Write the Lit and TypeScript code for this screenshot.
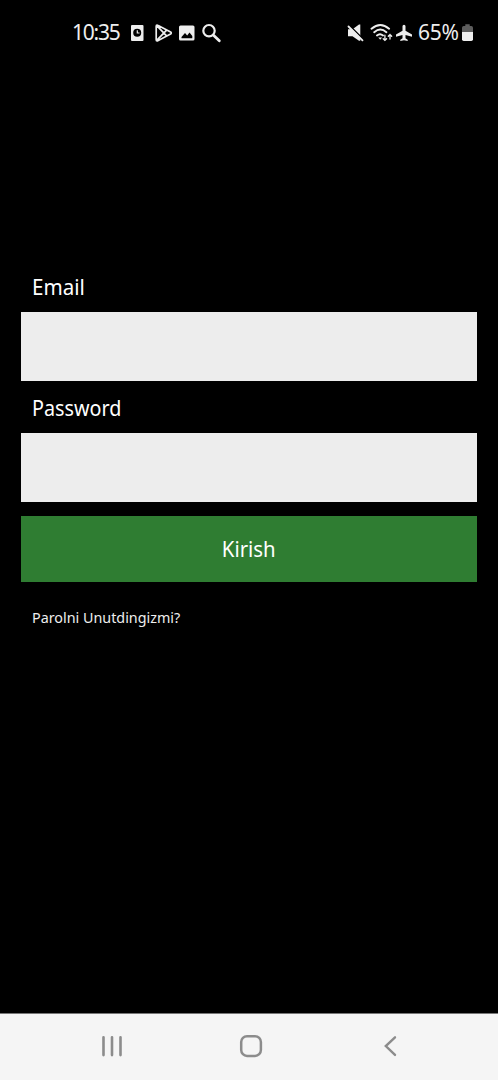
import { LitElement, html, css } from "lit";
import { customElement } from "lit/decorators.js";

@customElement("status-bar")
export class StatusBar extends LitElement {
  static styles = css`
    :host { display: flex; align-items: center; height: 66px; box-sizing: border-box; padding: 0 24px 0 72px; color: #eee; font: 21px/28px "Noto Sans", sans-serif; }
    svg { display: block; flex: none; }
    .time, .battery { white-space: nowrap; margin-top: -2px; }
    .time { width: 57px; letter-spacing: -1.2px; }
    .spacer { flex: 1; }
    .battery { width: 43px; margin-left: 1px; letter-spacing: -0.3px; }
  `;
  render() {
    return html`
      <span class="time">10:35</span>
      <svg width="95" height="20" viewBox="129 23 95 20" fill="#eee">
        <rect x="131" y="25" width="12.500" height="16" rx="1"/>
        <circle cx="137.200" cy="32.800" r="4" fill="#000"/>
        <path d="M137.300 30.300v2.700h2.200" fill="none" stroke="#eee" stroke-width="1.200"/>
        <path d="M157 25.200q-.800 0-.800 1v13.600q0 1 .8 1q.5 0 1.200-.4l12.400-6.400q1.300-1 0-2l-12.400-6.400q-.7-.4-1.200-.4zM157 25.800l9.600 10M157 40.200l9.600-10" fill="none" stroke="#eee" stroke-width="1.700" stroke-linejoin="round"/>
        <path fill-rule="evenodd" d="M180.500 25.500h12.500a1.500 1.500 0 0 1 1.500 1.500v12a1.500 1.500 0 0 1-1.500 1.500H180.500a1.500 1.500 0 0 1-1.500-1.500v-12a1.500 1.500 0 0 1 1.500-1.500zM181.500 38.200h10.800v-2.300l-2.800-3.300l-2.300 2.800l-2.200-2.300l-3.500 4z"/>
        <circle cx="209" cy="30.700" r="5.700" fill="none" stroke="#eee" stroke-width="2.200"/>
        <path d="M213.500 35.200l5.800 5.500" stroke="#eee" stroke-width="2.800" stroke-linecap="round"/>
      </svg>
      <span class="spacer"></span>
      <svg width="72" height="20" viewBox="345 23 72 20" fill="#eee">
        <path d="M348 29.300h4.500l6.500-4.800h1.300v16.300h-1.300l-6.500-4.500h-4.500z"/>
        <path d="M350 26l14 14" fill="none" stroke="#000" stroke-width="1.700"/>
        <path d="M348.500 26.500l14 13.900" fill="none" stroke="#eee" stroke-width="1.800" stroke-linecap="round"/>
        <g fill="none" stroke="#eee" stroke-linecap="round">
          <path d="M371.500 28.700q8.800-7.600 17.600 0M374.200 32.200q6.100-5.200 12.200 0M377 35.500q3-2.500 6 0" stroke-width="1.900"/>
          <path d="M384.900 35.200v5M383.200 38.700l1.700 1.700l1.700-1.700M390 39v-4.600M388.300 36.200l1.700-1.700l1.700 1.700" stroke-width="1.300"/>
        </g>
        <path d="M378.300 37.500h3.800l-1.900 2.200z"/>
        <path d="M404 24.800q1.500 0 1.500 1.500v4.500l6.500 3.800v2.100l-6.500-1.800v3.400l2.200 1.500v1.300l-3.700-.9l-3.700.9v-1.300l2.200-1.500v-3.400l-6.500 1.800v-2.100l6.500-3.800v-4.500q0-1.500 1.500-1.500z"/>
      </svg>
      <span class="battery">65%</span>
      <svg width="13" height="20" viewBox="461 23 13 20">
        <path d="M465.300 24.200h4.400v1.800h1.600q1.700 0 1.700 1.700V32H462v-4.300q0-1.700 1.700-1.700h1.600z" fill="#5d5d5d"/>
        <path d="M462 32h11v7.300q0 1.700-1.700 1.700h-7.600q-1.700 0-1.700-1.700z" fill="#eee"/>
      </svg>`;
  }
}

@customElement("login-form")
export class LoginForm extends LitElement {
  static styles = css`
    :host { display: block; padding: 206px 21px 0; color: #fff; font: 21px/30px "Noto Sans", sans-serif; }
    form { display: flex; flex-direction: column; }
    label { display: block; height: 40px; box-sizing: border-box; padding: 0 0 0 11px; }
    .name { display: inline-block; transform-origin: 0 50%; transform: scaleX(0.94); }
    .email { transform: scaleX(0.98); }
    .field { display: block; width: 100%; height: 69px; box-sizing: border-box; border: 0; border-radius: 0; margin: 0 0 12px; background: #ededed; outline: none; padding: 0 12px; font: inherit; }
    .field.last { margin-bottom: 14px; }
    button { height: 66px; border: 0; padding: 0; background: #2f7d32; color: #fff; font: inherit; }
    .kirish { display: inline-block; transform: scaleX(0.97); }
    .forgot { margin: 20px 0 0 11px; font-size: 15px; color: #eee; }
    .link { display: inline-block; transform-origin: 0 50%; transform: scaleX(0.955); }
  `;
  render() {
    return html`<form>
      <label for="email"><span class="name email">Email</span></label>
      <input class="field" id="email" type="email">
      <label for="password"><span class="name">Password</span></label>
      <input class="field last" id="password" type="password">
      <button type="button"><span class="kirish">Kirish</span></button>
      <div class="forgot"><span class="link">Parolni Unutdingizmi?</span></div>
    </form>`;
  }
}

@customElement("nav-bar")
export class NavBar extends LitElement {
  static styles = css`
    :host { display: flex; align-items: center; justify-content: space-between; height: 67px; box-sizing: border-box; border-top: 1px solid #777; padding: 0 96px 2px 100px; background: #f5f5f5; }
    svg { display: block; }
  `;
  render() {
    return html`
      <svg width="24" height="24" viewBox="100 1034 24 24" stroke="#8c8c8c" stroke-width="2.600" stroke-linecap="round"><path d="M103.500 1037.300v17.800M112 1037.300v17.800M120.500 1037.300v17.800"/></svg>
      <svg width="24" height="24" viewBox="239 1034 24 24" fill="none" stroke="#8c8c8c" stroke-width="2.500"><rect x="241.200" y="1036.200" width="19.700" height="19.700" rx="5.800"/></svg>
      <svg width="24" height="24" viewBox="378 1034 24 24" fill="none" stroke="#8c8c8c" stroke-width="2.400" stroke-linecap="round"><path d="M395 1037.300l-9.200 8.800l9.200 8.800"/></svg>`;
  }
}

@customElement("app-root")
export class AppRoot extends LitElement {
  static styles = css`
    :host { display: flex; flex-direction: column; height: 1080px; background: #000; overflow: hidden; }
    .main { flex: 1; }
  `;
  render() {
    return html`<status-bar></status-bar><login-form class="main"></login-form><nav-bar></nav-bar>`;
  }
}
